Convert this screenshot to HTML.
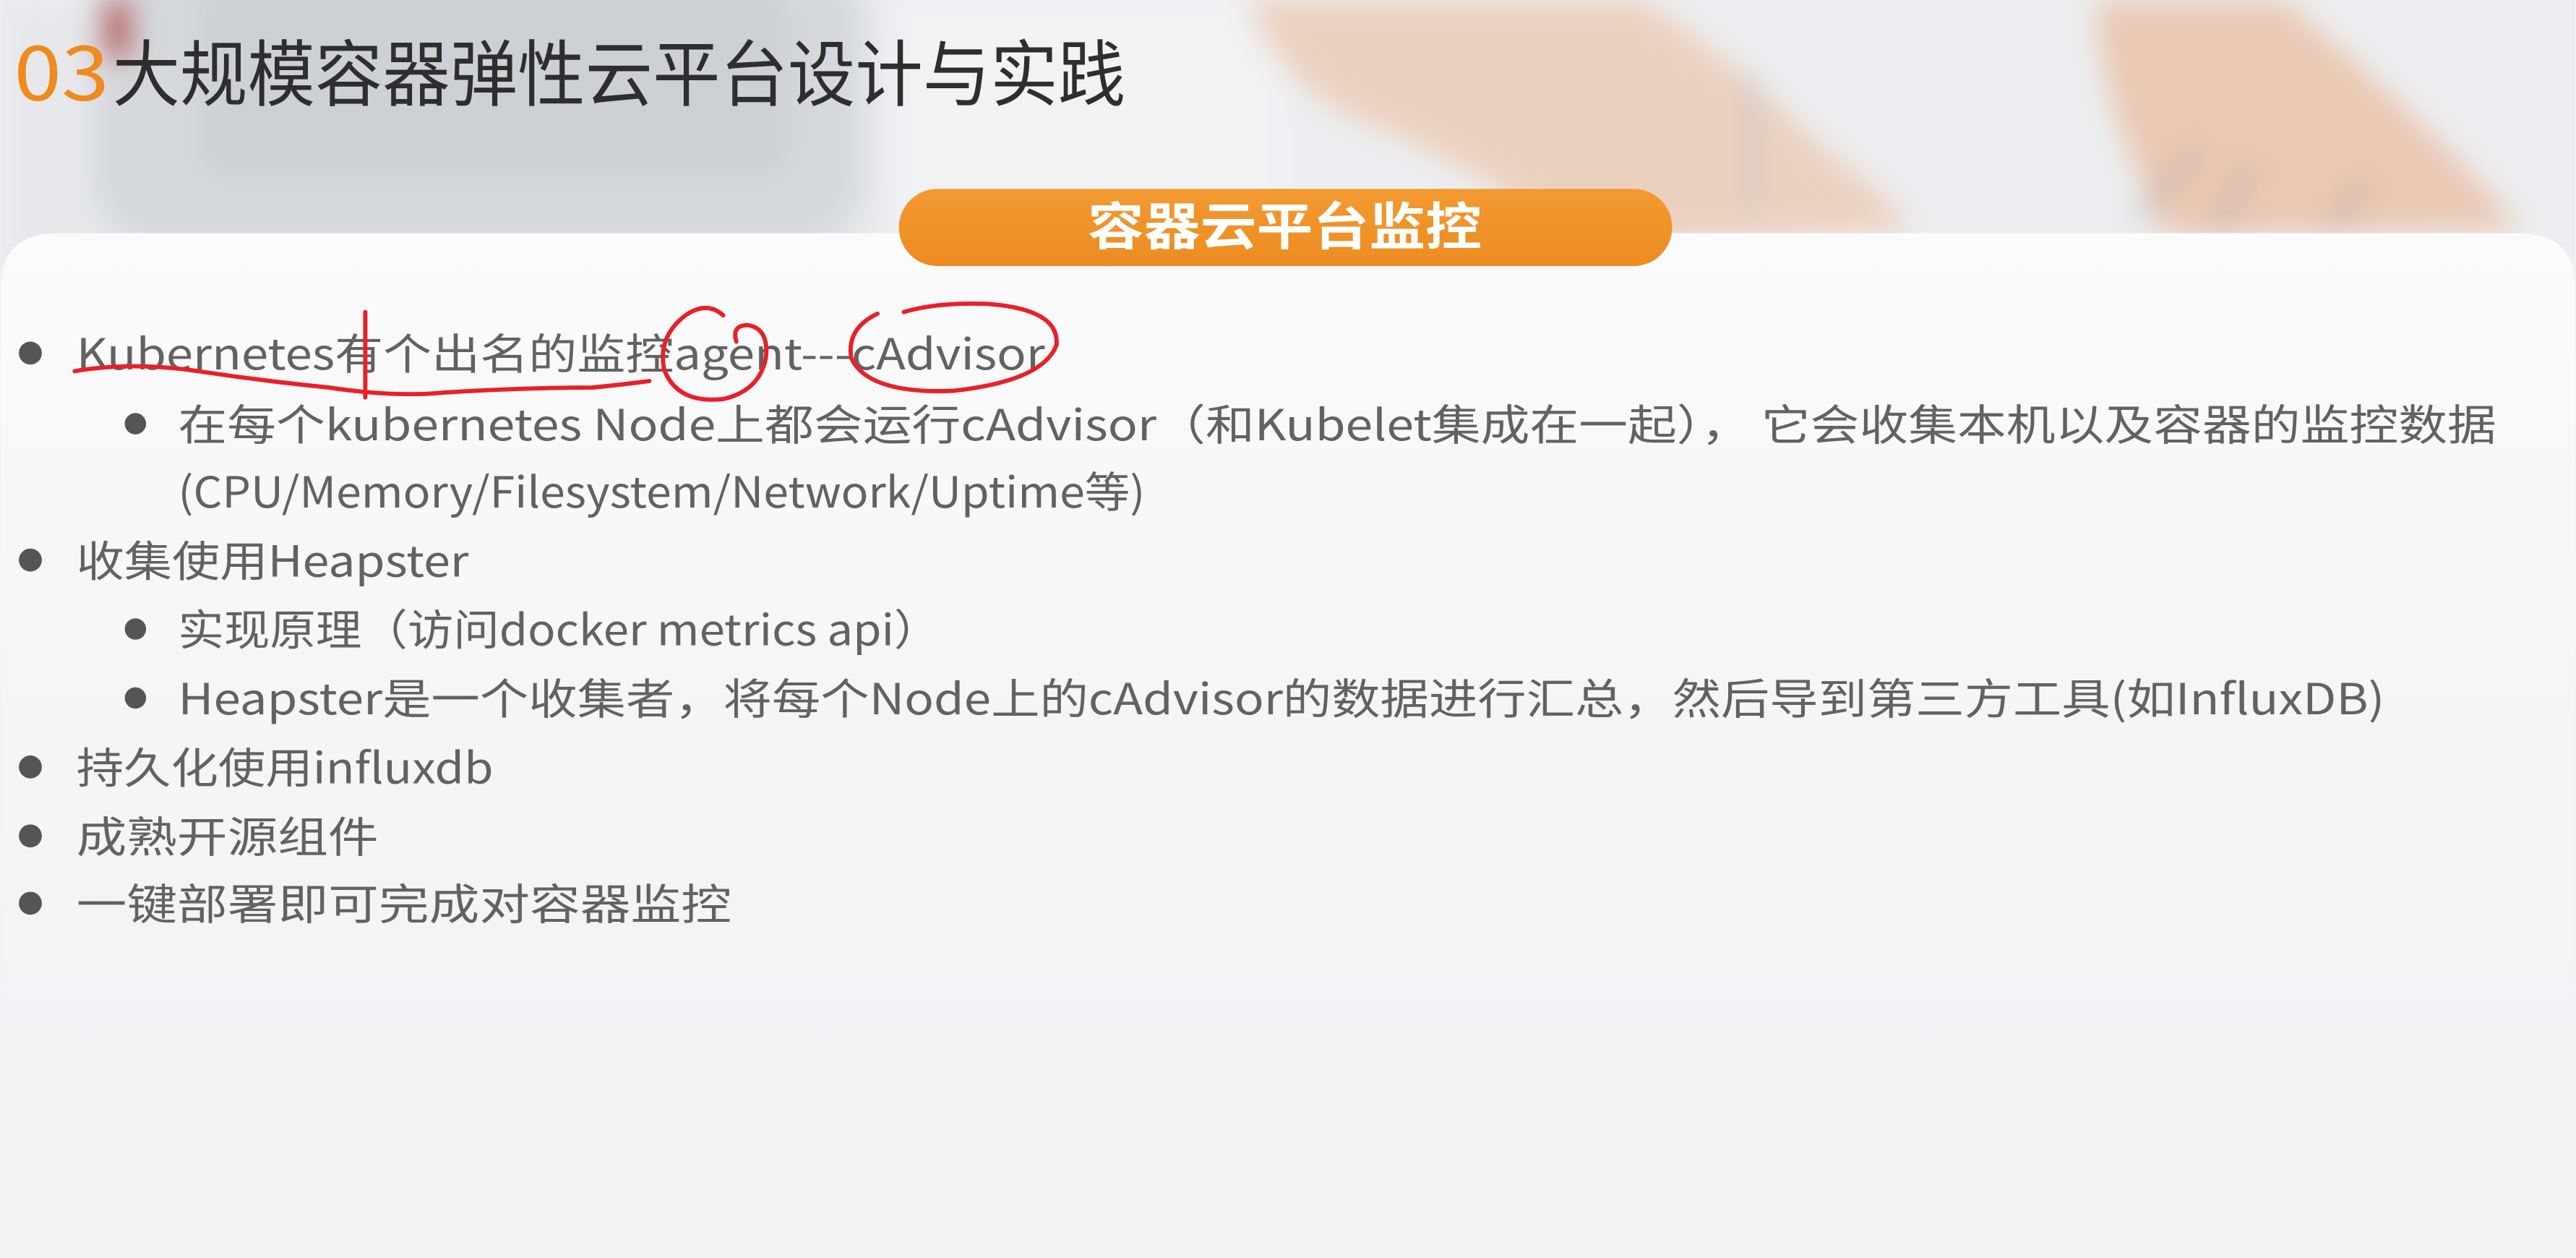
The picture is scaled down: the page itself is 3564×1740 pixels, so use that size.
<!DOCTYPE html>
<html><head><meta charset="utf-8"><style>html,body{margin:0;padding:0;background:#f3f1f4;overflow:hidden}svg{display:block}</style></head>
<body>
<svg width="3564" height="1740" viewBox="0 0 1568 766" xmlns="http://www.w3.org/2000/svg">
<defs>
<linearGradient id="card" x1="0" y1="0" x2="0" y2="1"><stop offset="0" stop-color="#fbfbfb"/><stop offset="0.5" stop-color="#f6f4f7"/><stop offset="1" stop-color="#f3f1f4"/></linearGradient>
<linearGradient id="pill" x1="0" y1="0" x2="0" y2="1"><stop offset="0" stop-color="#f29a32"/><stop offset="1" stop-color="#ec8c20"/></linearGradient>
<filter id="bl"><feGaussianBlur stdDeviation="9"/></filter>
</defs>
<rect width="1568" height="766" fill="#eceef1"/>
<g filter="url(#bl)">
<rect x="0" y="0" width="760" height="160" fill="#e6e8ec"/>
<rect x="55" y="-30" width="470" height="180" rx="40" fill="#d5d8dd"/>
<rect x="120" y="-10" width="360" height="120" rx="20" fill="#cdd0d5"/>
<rect x="540" y="0" width="240" height="160" fill="#f1f2f4"/>
<rect x="62" y="0" width="18" height="36" fill="#b84040"/>
<path d="M760 0 L1000 0 Q1060 40 1110 90 Q1150 120 1165 140 L960 150 Q900 100 820 70 Q770 40 760 0 Z" fill="#ecd0be"/>
<path d="M1275 0 L1390 0 Q1450 50 1490 90 Q1530 130 1535 140 L1320 145 Q1290 90 1280 40 Z" fill="#e9c9b4"/>
<rect x="1063" y="45" width="6" height="80" fill="#c2c4c9"/>
<path d="M1300 135 L1340 90 M1350 140 L1370 100 M1420 140 L1440 110" stroke="#8a8d93" stroke-width="3"/>
</g>
<path d="M0 175 Q0 142 35 142 L1533 142 Q1568 142 1568 175 L1568 766 L0 766 Z" fill="url(#card)"/>
<rect x="547" y="115" width="471" height="47" rx="23.5" fill="url(#pill)"/>
<text x="782" y="149" text-anchor="middle" font-family="'Noto Sans CJK SC',sans-serif" font-weight="bold" font-size="31" fill="#fff" textLength="240" lengthAdjust="spacingAndGlyphs">容器云平台监控</text>
<text x="8" y="61" font-family="'Noto Sans CJK SC',sans-serif" font-size="46" fill="#ee8a1e" textLength="58" lengthAdjust="spacingAndGlyphs">03</text>
<text x="68" y="61" font-family="'Noto Sans CJK SC',sans-serif" font-size="44" fill="#2e2e2e" textLength="617" lengthAdjust="spacingAndGlyphs">大规模容器弹性云平台设计与实践</text>
<g font-family="'Noto Sans CJK SC',sans-serif" font-size="26" fill="#626262">
<g fill="#555"><circle cx="18" cy="215" r="7"/><circle cx="82" cy="258" r="6.5"/><circle cx="18" cy="341" r="7"/><circle cx="82" cy="383" r="6.5"/><circle cx="82" cy="425" r="6.5"/><circle cx="18" cy="467" r="7"/><circle cx="18" cy="509" r="7"/><circle cx="18" cy="550" r="7"/></g>
<text x="46" y="225" textLength="590" lengthAdjust="spacingAndGlyphs">Kubernetes有个出名的监控agent---cAdvisor</text>
<text x="108" y="268" textLength="1412" lengthAdjust="spacingAndGlyphs">在每个kubernetes Node上都会运行cAdvisor（和Kubelet集成在一起）， 它会收集本机以及容器的监控数据</text>
<text x="108" y="309" textLength="589" lengthAdjust="spacingAndGlyphs">(CPU/Memory/Filesystem/Network/Uptime等)</text>
<text x="46" y="351" textLength="239" lengthAdjust="spacingAndGlyphs">收集使用Heapster</text>
<text x="108" y="393" textLength="464" lengthAdjust="spacingAndGlyphs">实现原理（访问docker metrics api）</text>
<text x="108" y="435" textLength="1344" lengthAdjust="spacingAndGlyphs">Heapster是一个收集者，将每个Node上的cAdvisor的数据进行汇总，然后导到第三方工具(如InfluxDB)</text>
<text x="46" y="477" textLength="254" lengthAdjust="spacingAndGlyphs">持久化使用influxdb</text>
<text x="46" y="519" textLength="184" lengthAdjust="spacingAndGlyphs">成熟开源组件</text>
<text x="46" y="560" textLength="399" lengthAdjust="spacingAndGlyphs">一键部署即可完成对容器监控</text>
</g>
<g fill="none" stroke="#e8202a" stroke-width="2.6" stroke-linecap="round">
<path d="M45 226 Q80 220 120 226 T200 236 Q240 242 270 239 Q320 236 360 236 Q380 234 395 232"/>
<path d="M222 190 L222 242"/>
<path d="M417 192 Q400 205 404 225 Q412 246 440 243 Q462 238 466 218 Q468 200 455 198 Q445 198 448 208 M417 192 Q430 183 440 192"/>
<path d="M534 191 Q515 200 518 218 Q528 240 580 238 Q635 232 643 210 Q645 188 600 185 Q570 184 550 190"/>
</g>
</svg>
</body></html>
